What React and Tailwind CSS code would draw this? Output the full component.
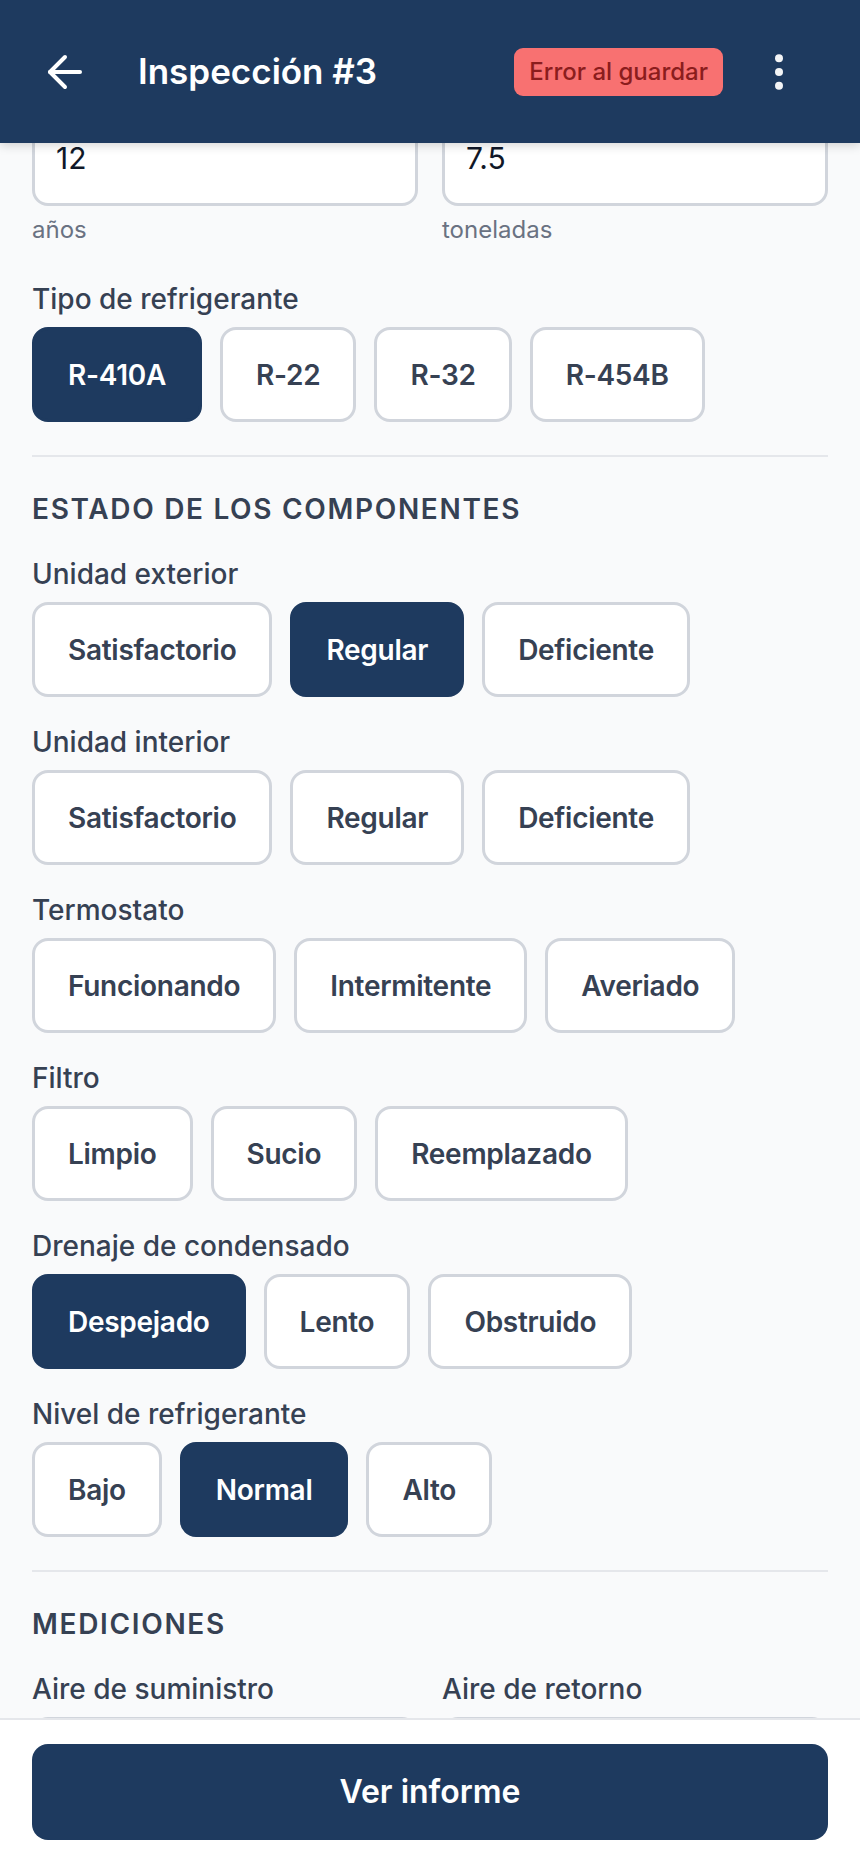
import React from "react";
import clsx from "clsx";

const FONT = { fontFamily: "Inter, 'Noto Sans', sans-serif" };

const BackArrow = () => (
  <svg width="36" height="36" viewBox="0 0 36 36" fill="none" stroke="currentColor" strokeWidth="4" strokeLinecap="round" strokeLinejoin="round">
    <path d="M33 18H3" />
    <path d="M18 3L3 18l15 15" />
  </svg>
);

const Kebab = () => (
  <svg width="10" height="40" viewBox="0 0 10 40" fill="currentColor">
    <circle cx="5" cy="6.3" r="4" />
    <circle cx="5" cy="20" r="4" />
    <circle cx="5" cy="33.7" r="4" />
  </svg>
);

const Label = ({ children }) => (
  <div className="text-[28px] leading-[40px] font-medium text-gray-700">{children}</div>
);

const TextInput = ({ value }) => (
  <div className="mt-[8px] flex h-[96px] items-center rounded-[16px] border-[3px] border-gray-300 bg-white px-[21px] text-[30px] text-gray-900">
    {value}
  </div>
);

const Options = ({ label, options, selected }) => (
  <div>
    <Label>{label}</Label>
    <div className="mt-[8px] flex flex-wrap gap-[18px]">
      {options.map((o) => (
        <button
          key={o}
          className={clsx(
            "h-[95px] rounded-[16px] border-[3px] px-[33px] text-[28px] font-semibold tracking-[-0.01em]",
            o === selected
              ? "border-[#1e3a5f] bg-[#1e3a5f] text-white"
              : "border-gray-300 bg-white text-gray-700"
          )}
        >
          {o}
        </button>
      ))}
    </div>
  </div>
);

const SectionTitle = ({ children }) => (
  <div className="mb-[25px] text-[28px] leading-[40px] font-semibold uppercase tracking-[0.06em] text-gray-700">
    {children}
  </div>
);

const components = [
  { label: "Unidad exterior", options: ["Satisfactorio", "Regular", "Deficiente"], selected: "Regular" },
  { label: "Unidad interior", options: ["Satisfactorio", "Regular", "Deficiente"], selected: null },
  { label: "Termostato", options: ["Funcionando", "Intermitente", "Averiado"], selected: null },
  { label: "Filtro", options: ["Limpio", "Sucio", "Reemplazado"], selected: null },
  { label: "Drenaje de condensado", options: ["Despejado", "Lento", "Obstruido"], selected: "Despejado" },
  { label: "Nivel de refrigerante", options: ["Bajo", "Normal", "Alto"], selected: "Normal" },
];

export default function App() {
  return (
    <div className="flex h-[1864px] w-full flex-col overflow-hidden bg-gray-50" style={FONT}>
      <header className="relative z-10 flex h-[143px] shrink-0 items-center bg-[#1e3a5f] pl-[47px] pr-[76px] text-white shadow-[0_2px_10px_rgba(0,0,0,0.18)]">
        <BackArrow />
        <h1 className="ml-[55px] flex-1 text-[35px] font-semibold">Inspección #3</h1>
        <span className="flex h-[48px] items-center rounded-[9px] bg-[#f87171] px-[15px] text-[24px] font-medium text-[#8b1d1d]">
          Error al guardar
        </span>
        <div className="ml-[51px] text-gray-100">
          <Kebab />
        </div>
      </header>

      <main className="flex-1 overflow-hidden px-[32px]">
        <div className="mt-[-81px]">
          <div className="grid grid-cols-2 gap-[24px]">
            <div>
              <Label>Antigüedad</Label>
              <TextInput value="12" />
              <div className="mt-[8px] text-[24px] leading-[32px] text-gray-500">años</div>
            </div>
            <div>
              <Label>Capacidad</Label>
              <TextInput value="7.5" />
              <div className="mt-[8px] text-[24px] leading-[32px] text-gray-500">toneladas</div>
            </div>
          </div>

          <div className="mt-[33px]">
            <Options label="Tipo de refrigerante" options={["R-410A", "R-22", "R-32", "R-454B"]} selected="R-410A" />
          </div>

          <section className="mt-[33px] border-t-2 border-gray-200 pt-[32px]">
            <SectionTitle>Estado de los componentes</SectionTitle>
            <div className="flex flex-col gap-[25px]">
              {components.map((c) => (
                <Options key={c.label} {...c} />
              ))}
            </div>
          </section>

          <section className="mt-[33px] border-t-2 border-gray-200 pt-[32px]">
            <SectionTitle>Mediciones</SectionTitle>
            <div className="grid grid-cols-2 gap-[24px]">
              <div>
                <Label>Aire de suministro</Label>
                <TextInput value="" />
              </div>
              <div>
                <Label>Aire de retorno</Label>
                <TextInput value="" />
              </div>
            </div>
          </section>
        </div>
      </main>

      <footer className="shrink-0 border-t-2 border-gray-200 bg-white px-[32px] py-[24px]">
        <button className="flex h-[96px] w-full items-center justify-center rounded-[16px] bg-[#1e3a5f] text-[32px] font-semibold text-white">
          Ver informe
        </button>
      </footer>
    </div>
  );
}
